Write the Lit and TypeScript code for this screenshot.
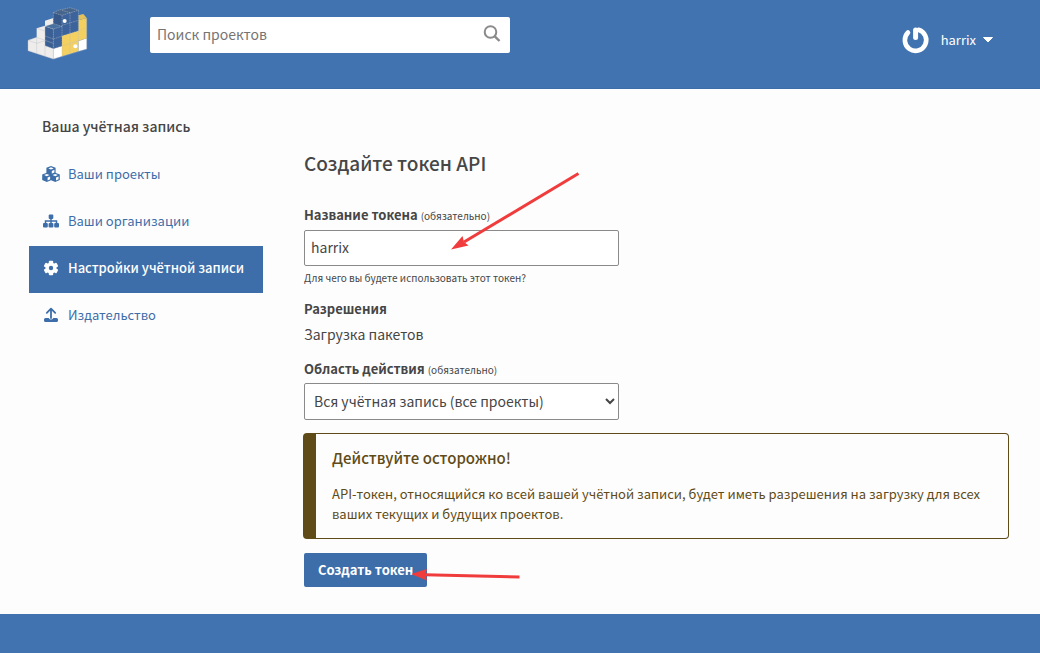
import { LitElement, html, css, svg } from "lit";
import { customElement } from "lit/decorators.js";

const logo = html`<svg class="logo" viewBox="21 21 183 159" role="img" aria-label="PyPI">
  <g fill="#efedec">
    <path d="M24 121 50 112 50 85 75 77 75 62 100 54V177L24 152Z" />
  </g>
  <path d="M100 146 126 138V169L100 177ZM175 123 200 115V147L175 154Z" fill="#fff" />
  <path d="M126 107 175 92V61L200 54V115L175 123V154L126 169Z" fill="#f4d060" />
  <path d="M175 46 190 42 200 54 175 61Z" fill="#e3c25b" />
  <path d="M75 79 100 87V146L75 137Z" fill="#3a5f94" />
  <path d="M100 87 126 79V107L126 138 100 146Z" fill="#3c639b" />
  <path d="M75 79 100 71 126 79 100 87Z" fill="#46709f" />
  <path d="M100 38 126 46V79L100 71Z" fill="#36588a" />
  <path d="M126 46 175 31V92L126 107Z" fill="#3c639b" />
  <path d="M100 38 115 31 150 23 175 31 126 46Z" fill="#46658c" />
  <g fill="none" stroke="#b9bdc4" stroke-width="2">
    <path d="M24 121 50 130V160M24 121V152L100 177 200 147V54M50 112V130L75 122M75 77V168M50 85 75 93M50 112 100 130M24 121 50 112" opacity=".6" />
    <path d="M75 137 100 146 200 115M75 108 100 117 200 84M75 79 100 87 126 79M100 87V177M126 46V169M150 38V162M175 31V154M75 79 100 71 126 79M100 38 126 46 175 31M126 76 175 61M100 38V71M100 38 115 31 150 23 175 31M126 31 150 38" stroke-dasharray="5 2" opacity=".65" />
  </g>
  <circle cx="134" cy="63" r="6" fill="#fff" />
  <circle cx="166" cy="139" r="6" fill="#fff" />
</svg>`;

const cube = (x: number, y: number) => svg`
  <path transform="translate(${x} ${y})" d="M5 0 9.600 1.800V7.200L5 9.300.400 7.200V1.800Z" fill="currentColor" />
  <path transform="translate(${x} ${y})" d="M5 1.300 7.700 2.400 5 3.500 2.300 2.400ZM5.800 4.900 8.400 3.800V6.500L5.800 7.700Z" fill="#fdfdfd" />`;

const icons = {
  cubes: html`<svg class="icon" viewBox="0 0 18 16" aria-hidden="true">${cube(4, 0)}${cube(-0.2, 6.7)}${cube(8.2, 6.7)}</svg>`,
  orgs: html`<svg class="icon" viewBox="0 0 18 16" aria-hidden="true">
    <path d="M9 4V11M3.500 11V8H14.500V11" fill="none" stroke="currentColor" stroke-width="1.500" />
    <g fill="currentColor"><rect x="6.700" y="1.500" width="4.600" height="4.500" rx="1" /><rect x="1" y="10" width="4.800" height="4.500" rx="1" /><rect x="6.600" y="10" width="4.800" height="4.500" rx="1" /><rect x="12.200" y="10" width="4.800" height="4.500" rx="1" /></g>
  </svg>`,
  gear: html`<svg class="icon" viewBox="0 0 18 16" aria-hidden="true">
    <g transform="translate(9 8)" fill="currentColor">
      ${[0, 60, 120].map((a) => svg`<rect x="-2.200" y="-7.300" width="4.400" height="14.600" rx="1" transform="rotate(${a})" />`)}
      <circle r="5.500" /><circle r="2.200" fill="#3d6ea9" />
    </g>
  </svg>`,
  upload: html`<svg class="icon" viewBox="0 0 18 16" aria-hidden="true">
    <path d="M9 11V2M4.800 5.800 9 1.600 13.200 5.800" fill="none" stroke="currentColor" stroke-width="1.800" stroke-linecap="round" stroke-linejoin="round" />
    <path d="M3.500 11H6.900V11.600Q9 13.500 11.100 11.600V11H14.500Q16 11 16 12.500V13.500Q16 15 14.500 15H3.500Q2 15 2 13.500V12.500Q2 11 3.500 11Z" fill="currentColor" />
  </svg>`,
};

@customElement("app-root")
export class AppRoot extends LitElement {
  static styles = css`
    :host {
      display: flex;
      flex-direction: column;
      min-height: 100vh;
      background: #fdfdfd;
      color: #464646;
      font: 15px/24px "Noto Sans CJK SC", "Noto Sans", sans-serif;
    }
    * { box-sizing: border-box; }
    h1, h2, h3, p, ul { margin: 0; padding: 0; }
    h1, h2, h3 { font-weight: 500; }
    input, select, button { font: inherit; color: inherit; margin: 0; }
    .header {
      display: flex;
      align-items: flex-start;
      padding: 7px 46px 0 27px;
      height: 89px;
      background: #4273b1;
      border-bottom: 1px solid #3d6ea9;
    }
    .logo { display: block; width: 61px; height: 53px; }
    .search {
      display: flex;
      align-items: center;
      width: 360px;
      height: 36px;
      margin: 10px auto 0 62px;
      padding: 0 9px 2px 0;
      background: #fff;
      border-radius: 2px;
    }
    .search-box {
      flex: 1;
      min-width: 0;
      height: 34px;
      padding: 0 7px;
      border: 0;
      background: none;
      font-size: 14px;
    }
    .search-box::placeholder { color: #757575; opacity: 1; }
    .search-button { display: flex; padding: 0; border: 0; background: none; color: #8a8a8a; }
    .search-icon { width: 18px; height: 18px; }
    .user {
      display: flex;
      align-items: center;
      gap: 10px;
      margin-top: 17px;
      padding: 0;
      border: 0;
      background: none;
      color: #fff;
      font-size: 13px;
      line-height: 32px;
    }
    .avatar { width: 30px; height: 30px; }
    .caret { width: 12px; height: 8px; margin-left: -4px; }
    .page {
      flex: 1;
      display: grid;
      grid-template-columns: 234px minmax(0, 1fr);
      column-gap: 40px;
      padding: 25px 31px 27px 29px;
    }
    .side-title { padding-left: 13px; font-size: 14px; line-height: 24px; }
    .menu { list-style: none; margin-top: 14px; }
    .menu-link {
      display: flex;
      align-items: center;
      gap: 8px;
      height: 47px;
      padding: 0 0 3px 13px;
      color: #3d6ea9;
      font-size: 13px;
      text-decoration: none;
    }
    .menu-link.active { background: #3d6ea9; color: #fff; font-weight: 500; }
    .icon { width: 18px; height: 16px; }
    .main { position: relative; padding: 34px 0 0 1px; }
    .title { font-size: 19px; line-height: 30px; margin-bottom: 27px; }
    .label { display: block; font-size: 13px; line-height: 20px; font-weight: 700; }
    .required { font-size: 10px; font-weight: 400; }
    .field {
      display: block;
      width: 315px;
      max-width: 100%;
      height: 36px;
      margin-top: 4px;
      padding: 0 6px 2px;
      border: 1px solid #8a8a8a;
      border-radius: 2px;
      background: #fff;
      font-size: 14px;
    }
    select.field { height: 37px; margin-top: 3px; padding: 0 0 2px 5px; }
    .help { font-size: 10px; line-height: 16px; margin: 4px 0 13px; }
    .value { font-size: 14px; line-height: 24px; margin: 3px 0 13px; }
    .callout {
      margin: 13px 0 14px -1px;
      padding: 11px 16px 14px;
      border: 1px solid #5f4b18;
      border-left-width: 13px;
      border-radius: 4px;
      color: #5f4b18;
    }
    .callout-title { font-size: 15px; line-height: 26px; margin-bottom: 13px; }
    .callout-text { font-size: 13px; line-height: 20px; }
    .submit {
      display: block;
      height: 34px;
      padding: 0 14px 1px;
      border: 0;
      border-radius: 2px;
      background: #3d6ea9;
      color: #fff;
      font-size: 13px;
      font-weight: 700;
    }
    .arrows { position: absolute; left: 0; top: 0; width: 320px; height: 480px; pointer-events: none; }
    .footer { height: 39px; background: #4273b1; }
  `;

  render() {
    return html`
      <header class="header">
        <a href="#">${logo}</a>
        <form class="search" role="search">
          <input class="search-box" type="search" placeholder="Поиск проектов" aria-label="Поиск проектов" />
          <button class="search-button" type="button" aria-label="Поиск">
            <svg class="search-icon" viewBox="0 0 18 18" fill="none" stroke="currentColor" stroke-width="2">
              <circle cx="7.500" cy="7" r="5.800" /><path d="M11.800 11.300 16.500 16" stroke-width="2.400" />
            </svg>
          </button>
        </form>
        <button class="user" type="button">
          <svg class="avatar" viewBox="0 0 30 30" fill="none" stroke="#fff" stroke-width="4.600" stroke-linecap="round">
            <path d="M7 7.500A10.700 10.700 0 1 0 17.500 4.800" /><path d="M14.600 5V12.500" stroke-width="5" />
          </svg>
          harrix
          <svg class="caret" viewBox="0 0 12 8"><path d="M1.500 1.500H10.500L6 6Z" fill="#fff" stroke="#fff" stroke-linejoin="round" /></svg>
        </button>
      </header>
      <div class="page">
        <nav>
          <h2 class="side-title">Ваша учётная запись</h2>
          <ul class="menu">
            <li><a class="menu-link" href="#">${icons.cubes}Ваши проекты</a></li>
            <li><a class="menu-link" href="#">${icons.orgs}Ваши организации</a></li>
            <li><a class="menu-link active" href="#" aria-current="page">${icons.gear}Настройки учётной записи</a></li>
            <li><a class="menu-link" href="#">${icons.upload}Издательство</a></li>
          </ul>
        </nav>
        <main class="main">
          <h1 class="title">Создайте токен API</h1>
          <form>
            <label class="label" for="name">Название токена <span class="required">(обязательно)</span></label>
            <input class="field" id="name" type="text" value="harrix" />
            <p class="help">Для чего вы будете использовать этот токен?</p>
            <span class="label">Разрешения</span>
            <p class="value">Загрузка пакетов</p>
            <label class="label" for="scope">Область действия <span class="required">(обязательно)</span></label>
            <select class="field" id="scope"><option>Вся учётная запись (все проекты)</option></select>
            <div class="callout">
              <h3 class="callout-title">Действуйте осторожно!</h3>
              <p class="callout-text">API-токен, относящийся ко всей вашей учётной записи, будет иметь разрешения на загрузку для всех ваших текущих и будущих проектов.</p>
            </div>
            <button class="submit" type="button">Создать токен</button>
          </form>
          <svg class="arrows" viewBox="303 114 320 480" fill="#f03c3c" aria-hidden="true">
            <path d="M578.500 173.500 464 242" stroke="#f03c3c" stroke-width="3" /><path d="M451 249.500 462.500 236 464 242 468.500 245.500Z" />
            <path d="M519.500 577 425 574.700" stroke="#f03c3c" stroke-width="3" /><path d="M411 574 427 569 425 574.500 427 580.500Z" />
          </svg>
        </main>
      </div>
      <footer class="footer"></footer>
    `;
  }
}
